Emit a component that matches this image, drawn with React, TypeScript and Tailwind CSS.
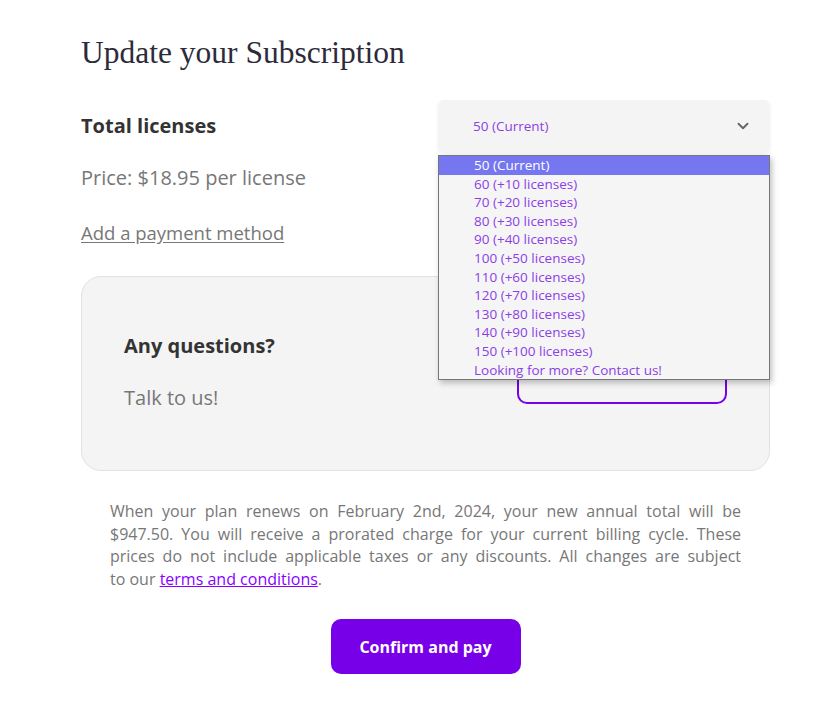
import { ChevronDown } from 'lucide-react'

const options = [
  '50 (Current)',
  '60 (+10 licenses)',
  '70 (+20 licenses)',
  '80 (+30 licenses)',
  '90 (+40 licenses)',
  '100 (+50 licenses)',
  '110 (+60 licenses)',
  '120 (+70 licenses)',
  '130 (+80 licenses)',
  '140 (+90 licenses)',
  '150 (+100 licenses)',
  'Looking for more? Contact us!',
]

const body = "font-['Open_Sans','Lato',sans-serif]"

export default function App() {
  return (
    <div className={`min-h-[717px] w-[836px] bg-white ${body}`}>
      <div className="ml-[81px] w-[689px] pt-[35px]">
        <h1 className="font-['Liberation_Serif','DejaVu_Serif',serif] text-[31.5px] leading-[36px] text-[#2d2b3a]">
          Update your Subscription
        </h1>

        {/* licenses row */}
        <div className="mt-[29px] flex justify-between">
          <div className="flex flex-col">
            <div className="flex h-[52px] items-center text-[20px] font-bold text-[#333]">
              Total licenses
            </div>
            <div className="mt-[12px] text-[20px] leading-[28px] text-[#777]">
              Price: $18.95 per license
            </div>
            <a className="mt-[27px] text-[18.5px] leading-[28px] text-[#777] underline underline-offset-2">
              Add a payment method
            </a>
          </div>

          <div className="relative w-[332px]">
            <div className="flex h-[52px] items-center justify-between rounded-md bg-[#f4f4f4] pl-[35px] pr-[18px] shadow-[0_2px_4px_rgba(0,0,0,0.06)]">
              <span className="text-[13.5px] text-[#8b3fe6]">50 (Current)</span>
              <ChevronDown size={18} strokeWidth={2.5} className="text-[#666]" />
            </div>
            {/* open dropdown list */}
            <ul className="absolute left-0 top-[55px] z-10 w-[332px] border border-[#777] bg-[#f5f5f5] shadow-[2px_3px_6px_rgba(0,0,0,0.25)]">
              {options.map((o, i) => (
                <li
                  key={o}
                  className={
                    i === 0
                      ? 'h-[18.6px] bg-[#7676f0] pl-[35px] text-[13.5px] leading-[18.6px] text-white'
                      : 'h-[18.6px] pl-[35px] text-[13.5px] leading-[18.6px] text-[#8b3fe6]'
                  }
                >
                  {o}
                </li>
              ))}
            </ul>
          </div>
        </div>

        {/* questions card */}
        <div className="mt-[29px] flex h-[195px] items-center justify-between rounded-[20px] border border-[#e2e2e2] bg-[#f4f4f4] px-[42px] pb-[4px]">
          <div className="flex flex-col">
            <div className="text-[20px] leading-[28px] font-bold text-[#333]">Any questions?</div>
            <div className="mt-[24px] text-[20px] leading-[28px] text-[#777]">Talk to us!</div>
          </div>
          <button
            aria-label="Contact us"
            className="mt-[12px] h-[53px] w-[210px] rounded-[10px] border-2 border-[#7800e8]"
          />
        </div>

        <p className="mx-[29px] mt-[29px] text-justify text-[16px] leading-[22.5px] text-[#777]">
          When your plan renews on February 2nd, 2024, your new annual total will be $947.50. You will
          receive a prorated charge for your current billing cycle. These prices do not include
          applicable taxes or any discounts. All changes are subject to{'\u00a0'}our{'\u00a0'}
          <a className="text-[#8a00ff] underline">terms and conditions</a>.
        </p>

        <div className="mt-[29px] flex justify-center">
          <button className="h-[55px] w-[190px] rounded-[10px] bg-[#7800e8] text-[16px] font-bold text-white">
            Confirm and pay
          </button>
        </div>
      </div>
    </div>
  )
}
